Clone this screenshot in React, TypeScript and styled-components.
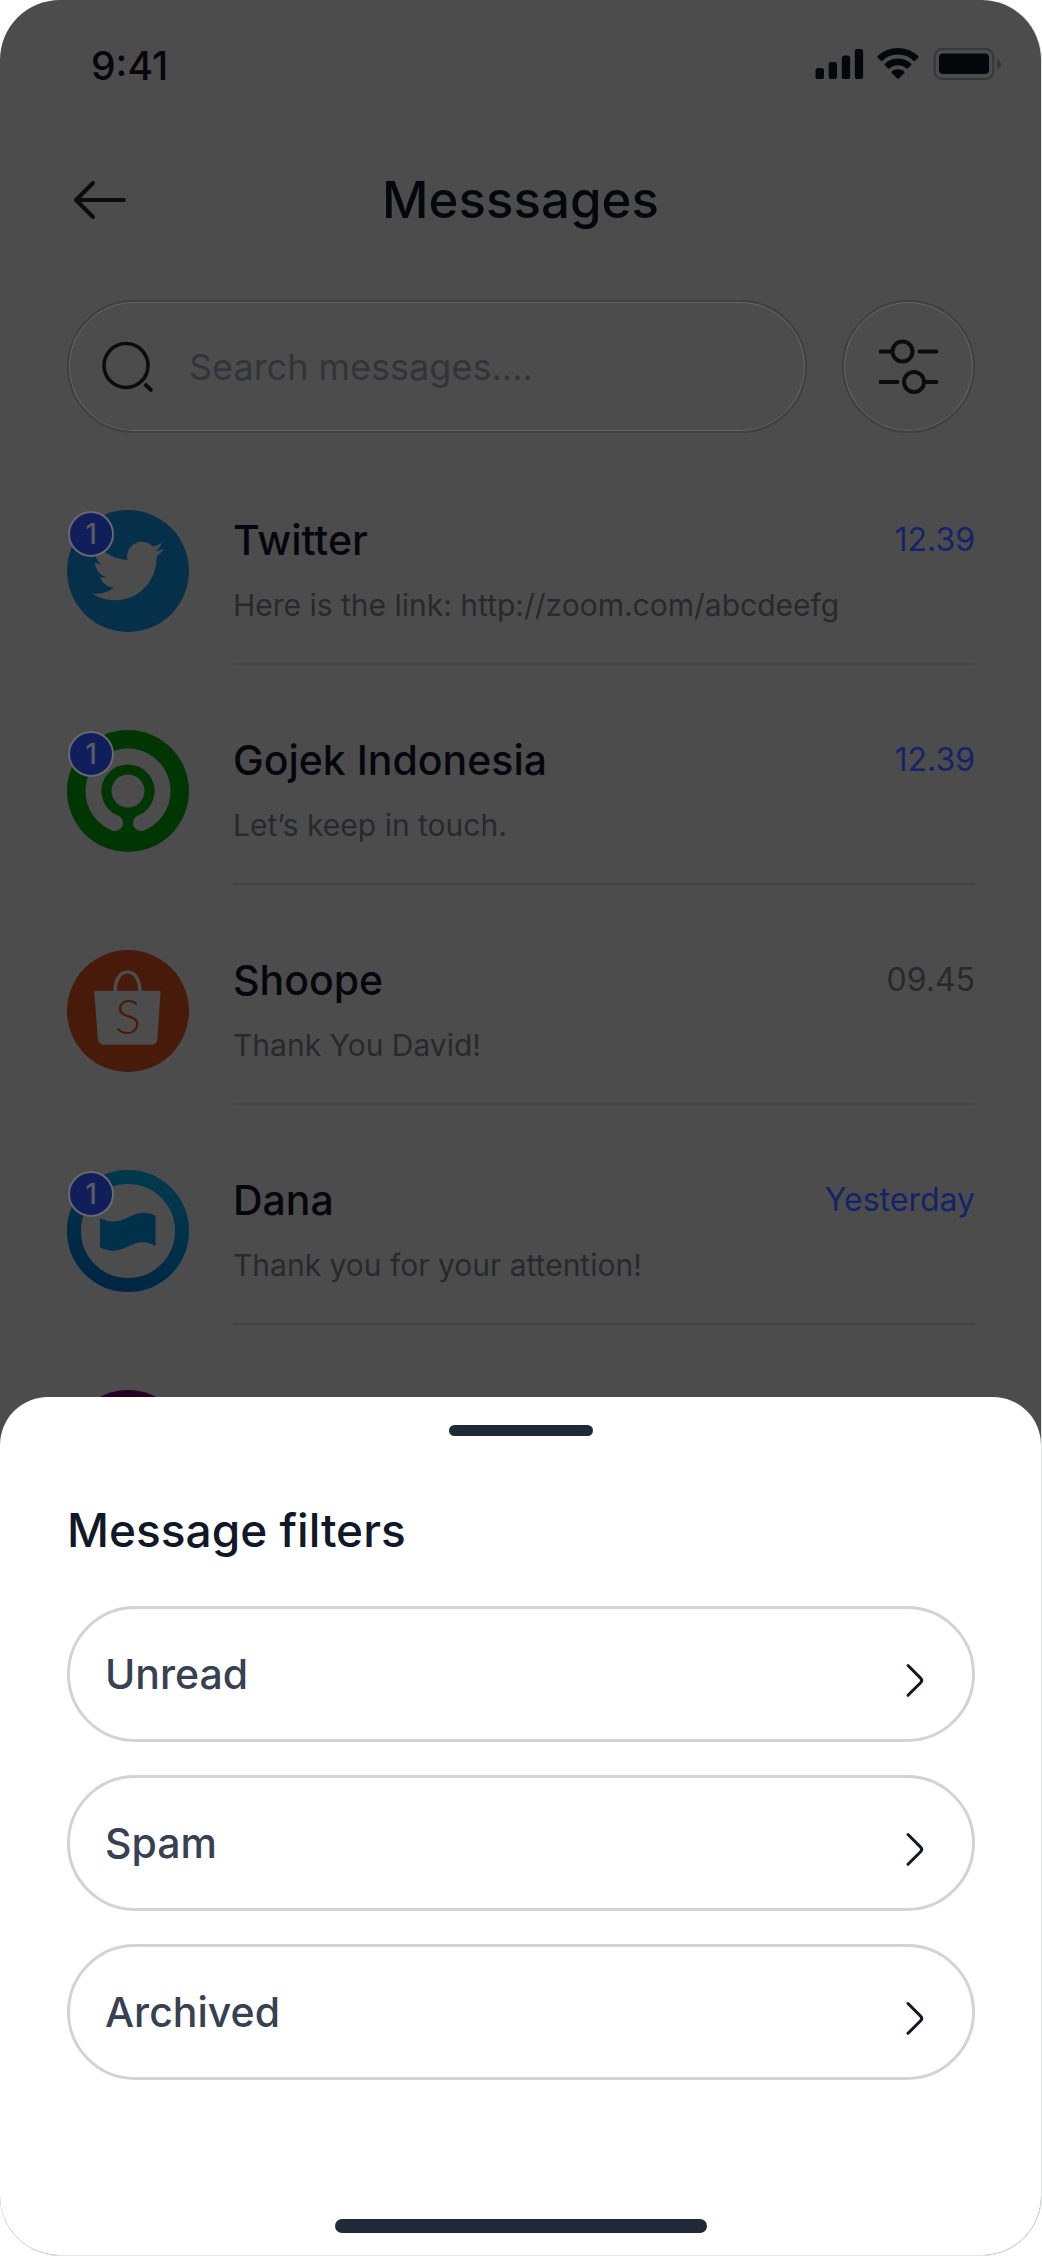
import React, { useState } from "react";
import styled, { createGlobalStyle } from "styled-components";
import { FaTwitter } from "react-icons/fa";

const c = {
  backdrop: "#4c4c4c",
  ink: "#05070c",
  icon: "#0c0c0c",
  muted: "#27292d",
  placeholder: "#323438",
  line: "#444446",
  outline: "#3f4042",
  glow: "#666666",
  blue: "#14236a",
  badge: "#111e5c",
  sheetInk: "#111827",
  sheetText: "#374151",
  sheetLine: "#d1d3d9",
  bar: "#1f2937",
};

const GlobalStyle = createGlobalStyle`
  *, *::before, *::after { box-sizing: border-box; }
  body { margin: 0; background: #ffffff; }
  button, input { font: inherit; color: inherit; }
  svg { display: block; }
`;

const Screen = styled.div`
  position: relative;
  min-height: 100vh;
  overflow: hidden;
  border: solid #e3e4e6;
  border-width: 0 1px 1px 0;
  border-radius: 60px;
  background: ${c.backdrop};
  color: ${c.ink};
  font-family: Inter, "Liberation Sans", sans-serif;
`;

const StatusBar = styled.div`
  display: flex;
  align-items: center;
  justify-content: space-between;
  height: 128px;
  padding: 4px 40px 0 91px;
`;

const Clock = styled.time`
  font-size: 39px;
  font-weight: 500;
  line-height: 48px;
`;

const Header = styled.header`
  display: grid;
  grid-template-columns: 60px 1fr 60px;
  align-items: center;
  height: 144px;
  padding: 0 67px;
`;

const BackButton = styled.button`
  width: 60px;
  height: 60px;
  padding: 0;
  border: 0;
  background: none;
  color: ${c.icon};
`;

const Title = styled.h1`
  margin: 0;
  font-size: 51px;
  font-weight: 500;
  line-height: 64px;
  text-align: center;
`;

const SearchRow = styled.form`
  display: flex;
  gap: 35px;
  padding: 28px 66px 0 67px;
`;

const SearchBox = styled.label`
  display: flex;
  flex: 1;
  align-items: center;
  gap: 34px;
  min-width: 0;
  height: 133px;
  padding: 0 32px;
  border: 2px solid ${c.outline};
  border-radius: 67px;
  box-shadow: inset 0 0 0 1px ${c.glow};
  color: ${c.icon};
`;

const SearchInput = styled.input`
  flex: 1;
  min-width: 0;
  padding: 0;
  border: 0;
  outline: 0;
  background: none;
  font-size: 36px;
  line-height: 48px;
  &::placeholder { color: ${c.placeholder}; opacity: 1; }
`;

const FilterButton = styled.button`
  display: grid;
  place-items: center;
  width: 133px;
  height: 133px;
  padding: 0;
  border: 2px solid ${c.outline};
  border-radius: 50%;
  box-shadow: inset 0 0 0 1px ${c.glow};
  background: none;
  color: ${c.icon};
`;

const List = styled.ul`
  margin: 0;
  padding: 77px 66px 0 67px;
  list-style: none;
`;

const Row = styled.li`
  display: flex;
  gap: 44px;
  padding-bottom: 65px;
`;

const Avatar = styled.div`
  position: relative;
  flex: none;
  width: 122px;
  height: 122px;
`;

const Badge = styled.span`
  position: absolute;
  top: 1px;
  left: 1px;
  display: grid;
  place-items: center;
  width: 46px;
  height: 46px;
  border: 2px solid #68686e;
  border-radius: 50%;
  background: ${c.badge};
  color: #5a5b60;
  font-size: 28px;
  font-weight: 500;
  line-height: 32px;
`;

const RowBody = styled.div`
  display: grid;
  flex: 1;
  grid-template-columns: 1fr auto;
  grid-template-rows: 60px 1fr;
  align-items: center;
  row-gap: 6px;
  min-width: 0;
  height: 155px;
  padding-bottom: 30px;
  border-bottom: 2px solid ${c.line};
`;

const Name = styled.h2`
  margin: 0;
  font-size: 41px;
  font-weight: 500;
  line-height: 60px;
`;

const When = styled.time<{ $unread: boolean }>`
  color: ${(p) => (p.$unread ? c.blue : c.muted)};
  font-size: 32px;
  line-height: 48px;
`;

const Preview = styled.p`
  grid-column: 1 / -1;
  margin: 0;
  overflow: hidden;
  color: ${c.muted};
  font-size: 30px;
  line-height: 48px;
  text-overflow: ellipsis;
  white-space: nowrap;
`;

const Sheet = styled.section`
  position: absolute;
  right: 0;
  bottom: 0;
  left: 0;
  display: flex;
  flex-direction: column;
  padding: 28px 66px 22px 67px;
  border-radius: 48px 48px 0 0;
  background: #ffffff;
`;

const Grabber = styled.div`
  align-self: center;
  width: 144px;
  height: 11px;
  border-radius: 6px;
  background: ${c.bar};
`;

const SheetTitle = styled.h2`
  margin: 62px 0 44px;
  color: ${c.sheetInk};
  font-size: 46px;
  font-weight: 500;
  line-height: 64px;
`;

const Options = styled.div`
  display: flex;
  flex-direction: column;
  gap: 33px;
`;

const Option = styled.button`
  display: flex;
  align-items: center;
  justify-content: space-between;
  height: 136px;
  padding: 0 43px 0 35px;
  border: 3px solid ${c.sheetLine};
  border-radius: 68px;
  background: #ffffff;
  color: ${c.sheetText};
  font-size: 41px;
  font-weight: 500;
  line-height: 56px;
  text-align: left;
`;

const HomeBar = styled.div`
  align-self: center;
  width: 372px;
  height: 14px;
  margin-top: 139px;
  border-radius: 7px;
  background: ${c.bar};
`;

const StatusIcons = () => (
  <svg width="186" height="38" viewBox="815 47 186 38" aria-hidden="true">
    <g fill={c.ink}>
      <rect x="815.5" y="68" width="8.5" height="11" rx="2.6" />
      <rect x="828.7" y="62" width="8.3" height="17" rx="2.6" />
      <rect x="841.8" y="55.5" width="8.3" height="23.5" rx="2.6" />
      <rect x="854.8" y="49" width="8.3" height="30" rx="2.6" />
      <path d="M898 54.6c5.900 0 11.500 2.200 15.800 6.300.3.300.8.300 1.100 0l3.500-3.500c.4-.4.400-1 0-1.400-11.400-10.700-29.400-10.700-40.800 0-.4.400-.4 1 0 1.400l3.500 3.500c.3.300.8.300 1.100 0 4.300-4.100 9.900-6.300 15.800-6.300z" />
      <path d="M898 65.300c3.200 0 6.300 1.200 8.700 3.300.3.300.8.300 1.200 0l3.300-3.500c.4-.4.400-1 0-1.400-7.500-6.800-18.900-6.800-26.400 0-.4.400-.4 1 0 1.400l3.300 3.500c.4.300.9.300 1.200 0 2.400-2.100 5.500-3.300 8.700-3.300z" />
      <path d="M904.300 71.500c.4.400.4 1 0 1.400l-5.600 5.700c-.4.400-1 .4-1.400 0l-5.600-5.700c-.4-.4-.4-1 0-1.400 3.600-3.100 9-3.100 12.600 0z" />
      <rect x="939" y="53.500" width="50" height="20.500" rx="4" />
    </g>
    <rect x="934.700" y="49" width="58.600" height="30" rx="7.500" fill="none" stroke="#36373a" strokeWidth="2" />
    <path d="M997 59v10.500c2.400-1 4-3 4-5.200s-1.600-4.300-4-5.300z" fill="#36373a" />
  </svg>
);

const BackIcon = () => (
  <svg width="60" height="60" viewBox="0 0 60 60" fill="none" stroke="currentColor" strokeWidth="4" strokeLinecap="round" strokeLinejoin="round" aria-hidden="true">
    <path d="M57 30H9M26 13L9 30l17 17" />
  </svg>
);

const SearchIcon = () => (
  <svg width="54" height="54" viewBox="0 0 54 54" fill="none" stroke="currentColor" strokeLinecap="round" aria-hidden="true">
    <circle cx="25" cy="25.500" r="22" strokeWidth="3.600" />
    <path d="M44.800 45l5 4.800" strokeWidth="4" />
  </svg>
);

const SlidersIcon = () => (
  <svg width="60" height="60" viewBox="0 0 60 60" fill="none" stroke="currentColor" strokeWidth="4" strokeLinecap="round" aria-hidden="true">
    <path d="M1.500 14.500h11M40.500 14.500h17M1.500 45h17M46.500 45h11" />
    <circle cx="23.500" cy="14.500" r="10" />
    <circle cx="35" cy="45" r="10" />
  </svg>
);

const ChevronIcon = () => (
  <svg width="24" height="50" viewBox="0 0 24 50" fill="none" stroke="#111827" strokeWidth="3" strokeLinecap="round" strokeLinejoin="round" aria-hidden="true">
    <path d="M3 16.500l12.600 12.600c1.400 1.400 1.400 3.200 0 4.600L3 46.300" />
  </svg>
);

const BirdDisc = styled.div`
  display: grid;
  place-items: center;
  width: 122px;
  height: 122px;
  border-radius: 50%;
  background: #063049;
  color: ${c.backdrop};
`;

const TwitterLogo = () => (
  <BirdDisc>
    <FaTwitter size={72} aria-hidden="true" />
  </BirdDisc>
);

const GojekLogo = () => (
  <svg width="122" height="122" viewBox="-61 -61 122 122" fill="none" aria-hidden="true">
    <circle r="61" fill="#003603" />
    <path d="M13 32A34.500 34.500 0 1 0-13 32" stroke={c.backdrop} strokeWidth="16" strokeLinecap="round" />
    <circle r="16.500" fill={c.backdrop} />
  </svg>
);

const ShopeeLogo = () => (
  <svg width="122" height="122" viewBox="0 0 122 122" aria-hidden="true">
    <circle cx="61" cy="61" r="61" fill="#481a0a" />
    <path d="M48 42c0-12 5-20 12.500-20S73 30 73 42" fill="none" stroke={c.backdrop} strokeWidth="3.600" />
    <path d="M28.600 40.700h63.500c1 0 1.500.6 1.400 1.500l-3 46.500c-.2 3.600-2.500 6-6 6H37c-3.600 0-6-2.400-6.200-6l-3.500-46.500c-.1-.9.400-1.500 1.300-1.500z" fill={c.backdrop} />
    <text x="61" y="84" textAnchor="middle" fontFamily="Lato, sans-serif" fontWeight="300" fontSize="48" fill="#481a0a">S</text>
  </svg>
);

const DanaLogo = () => (
  <svg width="122" height="122" viewBox="0 0 122 122" aria-hidden="true">
    <defs>
      <linearGradient id="dana" x1="0.700" y1="0" x2="0.300" y2="1">
        <stop offset="0" stopColor="#00394d" />
        <stop offset="1" stopColor="#002544" />
      </linearGradient>
    </defs>
    <circle cx="61" cy="61" r="54" fill="none" stroke="url(#dana)" strokeWidth="14" />
    <path d="M33 48c9 5 18 4.500 28-.500s18-7 27.500-1.500v30c-9-5.500-17-4.500-27.500.500s-19 6-28 .500z" fill="#00304a" />
  </svg>
);

const PurpleLogo = () => (
  <svg width="122" height="122" viewBox="0 0 122 122" aria-hidden="true">
    <circle cx="61" cy="61" r="61" fill="#1f0521" />
  </svg>
);

const messages = [
  { name: "Twitter", text: "Here is the link: http://zoom.com/abcdeefg", when: "12.39", unread: true, Logo: TwitterLogo },
  { name: "Gojek Indonesia", text: "Let’s keep in touch.", when: "12.39", unread: true, Logo: GojekLogo },
  { name: "Shoope", text: "Thank You David!", when: "09.45", unread: false, Logo: ShopeeLogo },
  { name: "Dana", text: "Thank you for your attention!", when: "Yesterday", unread: true, Logo: DanaLogo },
];

const filters = ["Unread", "Spam", "Archived"];

export default function App() {
  const [query, setQuery] = useState("");
  return (
    <Screen>
      <GlobalStyle />
      <StatusBar>
        <Clock>9:41</Clock>
        <StatusIcons />
      </StatusBar>
      <Header>
        <BackButton type="button" aria-label="Back">
          <BackIcon />
        </BackButton>
        <Title>Messsages</Title>
      </Header>
      <SearchRow onSubmit={(e) => e.preventDefault()}>
        <SearchBox>
          <SearchIcon />
          <SearchInput
            type="text"
            aria-label="Search messages"
            placeholder="Search messages...."
            value={query}
            onChange={(e) => setQuery(e.target.value)}
          />
        </SearchBox>
        <FilterButton type="button" aria-label="Message filters">
          <SlidersIcon />
        </FilterButton>
      </SearchRow>
      <List>
        {messages.map(({ name, text, when, unread, Logo }) => (
          <Row key={name}>
            <Avatar>
              <Logo />
              {unread && <Badge>1</Badge>}
            </Avatar>
            <RowBody>
              <Name>{name}</Name>
              <When $unread={unread}>{when}</When>
              <Preview>{text}</Preview>
            </RowBody>
          </Row>
        ))}
        <Row>
          <Avatar>
            <PurpleLogo />
          </Avatar>
        </Row>
      </List>
      <Sheet role="dialog" aria-labelledby="filters-title">
        <Grabber />
        <SheetTitle id="filters-title">Message filters</SheetTitle>
        <Options>
          {filters.map((label) => (
            <Option key={label} type="button">
              {label}
              <ChevronIcon />
            </Option>
          ))}
        </Options>
        <HomeBar />
      </Sheet>
    </Screen>
  );
}
